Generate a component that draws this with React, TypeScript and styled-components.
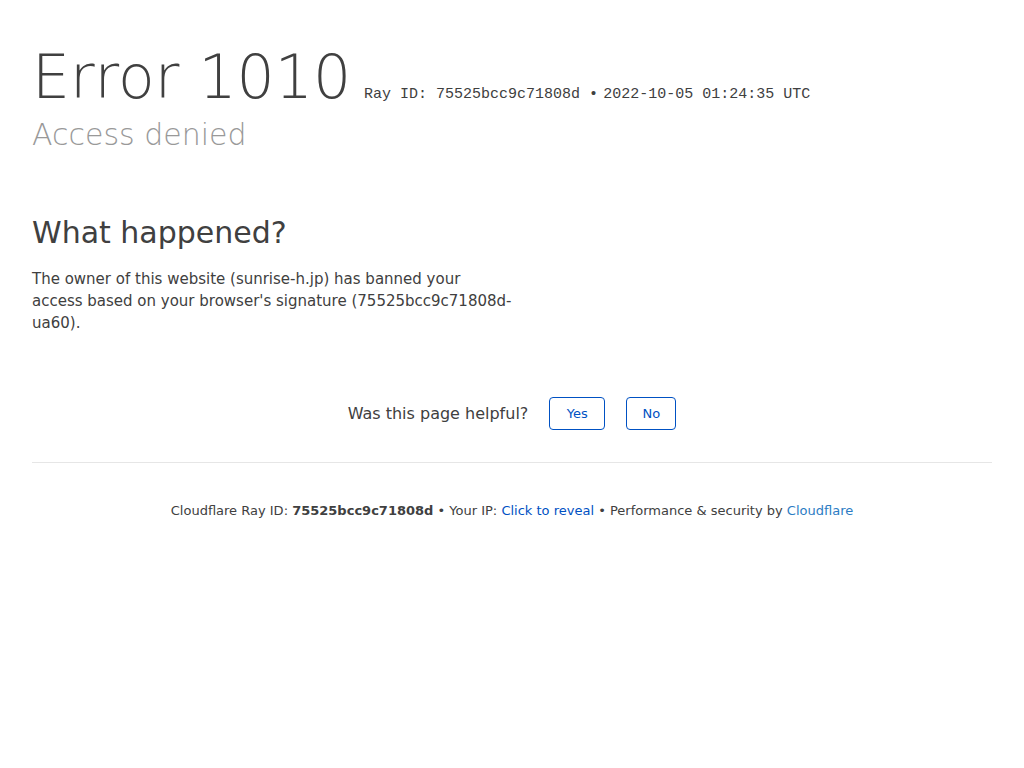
import React from "react";
import styled, { createGlobalStyle } from "styled-components";

const Global = createGlobalStyle`
  html, body { margin: 0; padding: 0; background: #fff; }
  body {
    font-family: "DejaVu Sans", "Noto Sans", sans-serif;
    color: #404040;
  }
  * { box-sizing: border-box; }
`;

const Wrapper = styled.div`
  padding: 41px 32px 0;
`;

const Header = styled.header`
  display: flex;
  flex-direction: column;
`;

const TitleRow = styled.div`
  display: flex;
  align-items: baseline;
  flex-wrap: wrap;
  margin-bottom: 4px;
`;

const Title = styled.h1`
  margin: 0;
  font-size: 60px;
  line-height: 72px;
  font-weight: 300;
  color: #404040;
`;

const RayHeading = styled.small`
  font-family: "Liberation Mono", "DejaVu Sans Mono", monospace;
  font-size: 15px;
  color: #404040;
  margin-left: 13px;
`;

const RayTime = styled.span`
  margin-left: 5px;
`;

const Subheadline = styled.h2`
  margin: 0;
  font-size: 30px;
  line-height: 36px;
  font-weight: 300;
  color: #999;
`;

const Section = styled.section`
  margin-top: 62px;
  width: 480px;
`;

const SectionTitle = styled.h2`
  margin: 0;
  font-size: 30px;
  line-height: 36px;
  font-weight: 400;
  color: #404040;
`;

const Paragraph = styled.p`
  margin: 17px 0 0;
  font-size: 15px;
  line-height: 22px;
  color: #404040;
`;

const Feedback = styled.div`
  margin-top: 63px;
  display: flex;
  align-items: center;
  justify-content: center;
  gap: 21px;
`;

const FeedbackText = styled.span`
  font-size: 16px;
  line-height: 20px;
  color: #404040;
`;

const FeedbackButton = styled.button<{ $width: number }>`
  font-family: "DejaVu Sans", "Noto Sans", sans-serif;
  font-size: 13px;
  line-height: 15px;
  padding: 8px 0;
  width: ${(p) => p.$width}px;
  height: 33px;
  background: #fff;
  color: #0051c3;
  border: 1px solid #0051c3;
  border-radius: 4px;
  cursor: pointer;
  text-align: center;
`;

const Rule = styled.hr`
  margin: 32px 0 0;
  border: 0;
  border-top: 1px solid #e6e6e6;
  height: 0;
`;

const Footer = styled.footer`
  margin-top: 38px;
  text-align: center;
  font-size: 13px;
  line-height: 20px;
  color: #404040;
`;

const Strong = styled.strong`
  font-weight: 700;
`;

const Link = styled.a<{ $tone?: "dark" | "light" }>`
  color: ${(p) => (p.$tone === "light" ? "#2c7cc4" : "#0051c3")};
  text-decoration: none;
`;

export default function App() {
  return (
    <>
      <Global />
      <Wrapper>
        <Header>
          <TitleRow>
            <Title>Error 1010</Title>
            <RayHeading>
              Ray ID: 75525bcc9c71808d •<RayTime>2022-10-05 01:24:35 UTC</RayTime>
            </RayHeading>
          </TitleRow>
          <Subheadline>Access denied</Subheadline>
        </Header>

        <Section>
          <SectionTitle>What happened?</SectionTitle>
          <Paragraph>
            The owner of this website (sunrise-h.jp) has banned your access based on your
            browser's signature (75525bcc9c71808d-ua60).
          </Paragraph>
        </Section>

        <Feedback>
          <FeedbackText>Was this page helpful?</FeedbackText>
          <FeedbackButton $width={56}>Yes</FeedbackButton>
          <FeedbackButton $width={50}>No</FeedbackButton>
        </Feedback>

        <Rule />

        <Footer>
          Cloudflare Ray ID: <Strong>75525bcc9c71808d</Strong> • Your IP:{" "}
          <Link href="#">Click to reveal</Link> • Performance &amp; security by{" "}
          <Link href="#" $tone="light">Cloudflare</Link>
        </Footer>
      </Wrapper>
    </>
  );
}
